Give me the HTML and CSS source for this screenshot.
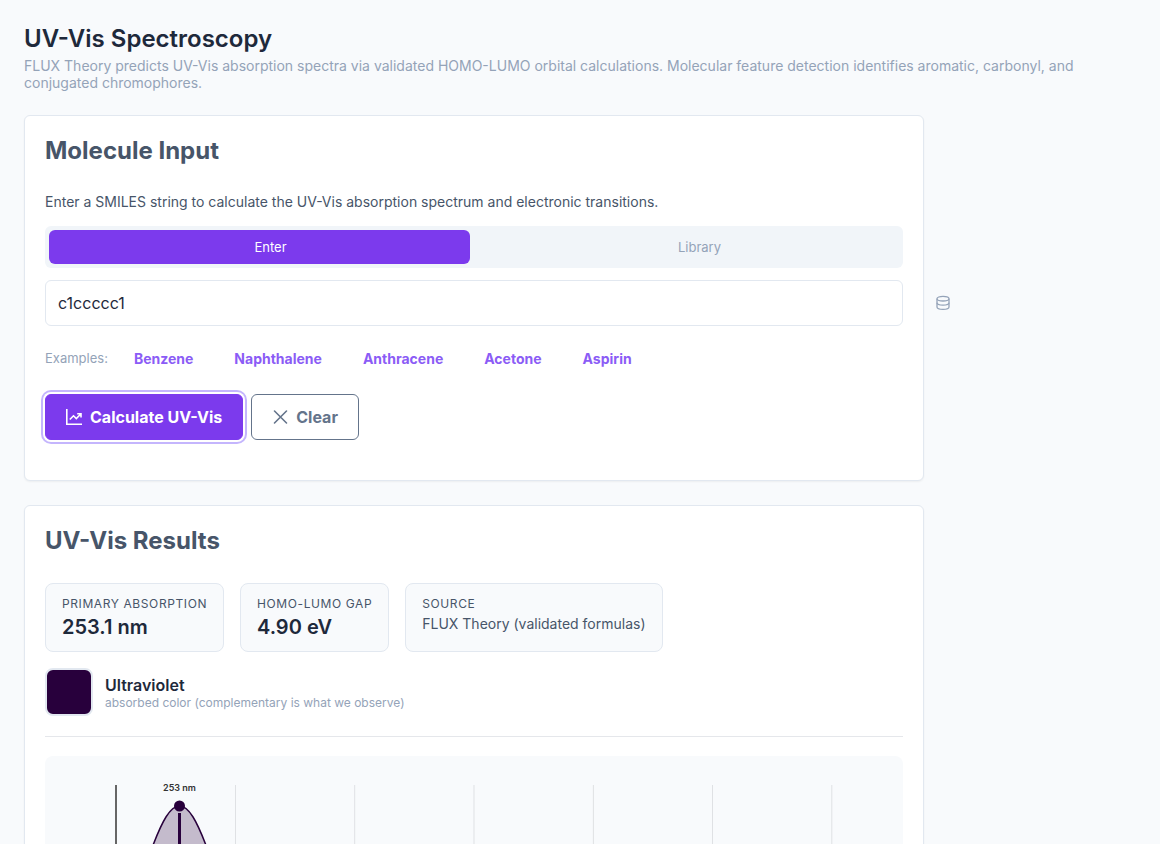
FILE: index.html
```html
<!DOCTYPE html>
<html lang="en">
<head>
  <meta charset="UTF-8">
  <meta name="viewport" content="width=device-width, initial-scale=1.0">
  <title>UV-Vis Spectroscopy</title>
  <link rel="stylesheet" href="styles.css">
</head>
<body>

<!-- Page header -->
<header class="page-header">
  <h1>UV-Vis Spectroscopy</h1>
  <p>FLUX Theory predicts UV-Vis absorption spectra via validated HOMO-LUMO orbital calculations. Molecular feature detection identifies aromatic, carbonyl, and conjugated chromophores.</p>
</header>

<main>
  <!-- Molecule input -->
  <section class="card">
    <h2>Molecule Input</h2>
    <p class="card-text">Enter a SMILES string to calculate the UV-Vis absorption spectrum and electronic transitions.</p>

    <div class="mode-toggle">
      <button type="button" class="mode active">Enter</button>
      <button type="button" class="mode">Library</button>
    </div>

    <div class="input-row">
      <input type="text" class="smiles-input" id="smiles" value="c1ccccc1" aria-label="SMILES string">
      <button type="button" class="icon-btn" aria-label="Open library">
        <svg width="16" height="16" viewBox="0 0 16 16" fill="none" stroke="currentColor" stroke-width="1.3">
          <ellipse cx="8" cy="3.7" rx="6" ry="2.3"/>
          <path d="M2 3.7v8.2c0 1.3 2.7 2.4 6 2.4s6-1.1 6-2.4V3.7"/>
          <path d="M2 7.8c0 1.3 2.7 2.4 6 2.4s6-1.1 6-2.4"/>
        </svg>
      </button>
    </div>

    <div class="examples">
      <span>Examples:</span>
      <button type="button" class="link-btn">Benzene</button>
      <button type="button" class="link-btn">Naphthalene</button>
      <button type="button" class="link-btn">Anthracene</button>
      <button type="button" class="link-btn">Acetone</button>
      <button type="button" class="link-btn">Aspirin</button>
    </div>

    <div class="actions">
      <button type="button" class="btn btn-primary">
        <svg width="16" height="16" viewBox="0 0 16 16" fill="none" stroke="currentColor" stroke-width="1.6">
          <path d="M.8 0v15.2H16"/>
          <path d="M3.8 10.500L7.500 6.800l2.800 2.800 4.200-4.400M11.200 4.800H15v3.800"/>
        </svg>
        Calculate UV-Vis
      </button>
      <button type="button" class="btn btn-outline">
        <svg width="16" height="16" viewBox="0 0 16 16" fill="none" stroke="currentColor" stroke-width="1.6" stroke-linecap="round">
          <path d="M2.500 2l12 12M14.500 2l-12 12"/>
        </svg>
        Clear
      </button>
    </div>
  </section>

  <!-- Results -->
  <section class="card">
    <h2>UV-Vis Results</h2>

    <div class="stats">
      <div class="stat">
        <div class="stat-label">Primary Absorption</div>
        <div class="stat-value">253.1 nm</div>
      </div>
      <div class="stat">
        <div class="stat-label">HOMO-LUMO Gap</div>
        <div class="stat-value">4.90 eV</div>
      </div>
      <div class="stat">
        <div class="stat-label">Source</div>
        <div class="stat-source">FLUX Theory (validated formulas)</div>
      </div>
    </div>

    <div class="color-row">
      <div class="swatch"></div>
      <div>
        <div class="color-name">Ultraviolet</div>
        <div class="color-note">absorbed color (complementary is what we observe)</div>
      </div>
    </div>

    <!-- Spectrum, 200 to 800 nm -->
    <div class="chart">
      <svg viewBox="0 0 858 320" role="img" aria-label="Absorption spectrum">
        <path class="grid" d="M190.500 29v250M309.700 29v250M429 29v250M548.400 29v250M667.500 29v250M786.800 29v250"/>
        <path class="axis" d="M71 29v250h716"/>
        <path class="peak" d="M71 211 C88 174 98 119 108.500 88 C117 66 125 50 134.500 50 C144 50 152 66 160.500 88 C174 124 188 205 206 241 C222 270 240 279 270 279 H71 Z"/>
        <path class="peak-line" d="M134.500 57v222"/>
        <circle class="peak-dot" cx="134.500" cy="50" r="5.500"/>
        <text class="peak-label" x="134.500" y="35">253 nm</text>
      </svg>
    </div>
  </section>
</main>

</body>
</html>
```

FILE: styles.css
```css
* {
  box-sizing: border-box;
}

body {
  margin: 0;
  padding: 24px;
  font-family: Inter, sans-serif;
  background: #f8fafc;
  color: #1e293b;
}

button,
input {
  font-family: inherit;
}

button {
  cursor: pointer;
}

/* Page header */
.page-header {
  margin-bottom: 24px;
}

.page-header h1 {
  margin: 0 0 4px;
  font-size: 24px;
  font-weight: 600;
  line-height: 29px;
}

.page-header p {
  margin: 0;
  font-size: 14px;
  line-height: 17px;
  color: #94a3b8;
}

/* Cards */
.card {
  max-width: 900px;
  margin-bottom: 24px;
  padding: 20px;
  background: #fff;
  border: 1px solid #e2e8f0;
  border-radius: 6px;
  box-shadow: 0 1px 2px rgba(0, 0, 0, 0.05);
}

.card h2 {
  margin: 0 0 28px;
  font-size: 24px;
  font-weight: 700;
  line-height: 29px;
  color: #475569;
}

.card-text {
  margin: 0 0 16px;
  font-size: 14px;
  line-height: 17px;
  color: #475569;
}

/* Enter / Library toggle */
.mode-toggle {
  display: grid;
  grid-template-columns: 1fr 1fr;
  gap: 8px;
  padding: 4px;
  margin-bottom: 12px;
  background: #f1f5f9;
  border-radius: 6px;
}

.mode {
  height: 34px;
  padding: 0 0 0 22px;
  border: none;
  border-radius: 6px;
  background: transparent;
  color: #94a3b8;
  font-size: 13px;
}

.mode.active {
  background: #7c3aed;
  color: #fff;
}

/* SMILES field, the library button hangs outside the card */
.input-row {
  display: flex;
  align-items: center;
  gap: 16px;
}

.smiles-input {
  flex: 0 0 100%;
  min-width: 0;
  height: 46px;
  padding: 0 12px;
  border: 1px solid #e2e8f0;
  border-radius: 6px;
  background: #fff;
  color: #1e293b;
  font-size: 16px;
}

.icon-btn {
  flex: 0 0 48px;
  height: 40px;
  padding: 0;
  border: none;
  background: transparent;
  color: #94a3b8;
}

.icon-btn svg {
  display: block;
  margin: auto;
}

/* Examples */
.examples {
  display: flex;
  flex-wrap: wrap;
  align-items: center;
  gap: 1px;
  margin: 16px 0 20px;
  font-size: 13px;
  color: #94a3b8;
}

.examples span {
  margin-right: 5px;
}

.link-btn {
  height: 32px;
  padding: 0 20px;
  border: none;
  background: transparent;
  color: #8b5cf6;
  font-size: 14px;
  font-weight: 700;
}

/* Actions */
.actions {
  display: flex;
  gap: 8px;
  margin-bottom: 20px;
}

.btn {
  display: flex;
  align-items: center;
  gap: 8px;
  height: 46px;
  padding: 0 20px;
  border: 1px solid #64748b;
  border-radius: 6px;
  font-size: 16px;
  font-weight: 700;
}

.btn-primary {
  background: #7c3aed;
  border-color: #7c3aed;
  color: #fff;
  box-shadow: 0 0 0 2px #fff, 0 0 0 4px #c4b5fd;
}

.btn-outline {
  background: #fff;
  color: #64748b;
}

/* Result stats */
.stats {
  display: flex;
  flex-wrap: wrap;
  gap: 16px;
  margin-bottom: 16px;
}

.stat {
  padding: 12px 16px;
  background: #f8fafc;
  border: 1px solid #e2e8f0;
  border-radius: 8px;
}

.stat-label {
  font-size: 12px;
  line-height: 15px;
  letter-spacing: 0.05em;
  text-transform: uppercase;
  color: #475569;
}

.stat-value {
  margin-top: 4px;
  font-size: 20px;
  font-weight: 600;
  line-height: 24px;
}

.stat-source {
  margin-top: 4px;
  font-size: 14px;
  line-height: 17px;
  color: #475569;
}

/* Absorbed colour */
.color-row {
  display: flex;
  align-items: center;
  gap: 12px;
  padding-bottom: 20px;
  margin-bottom: 19px;
  border-bottom: 1px solid #e5e7eb;
}

.swatch {
  width: 48px;
  height: 48px;
  background: #28003c;
  border: 2px solid #e2e8f0;
  border-radius: 8px;
}

.color-name {
  font-size: 16px;
  font-weight: 600;
  line-height: 20px;
}

.color-note {
  font-size: 12px;
  line-height: 15px;
  color: #94a3b8;
}

/* Spectrum chart */
.chart {
  background: #f8fafc;
  border-radius: 8px;
}

.chart svg {
  display: block;
  width: 100%;
}

.grid {
  fill: none;
  stroke: #dfe1e4;
  stroke-width: 1;
}

.axis {
  fill: none;
  stroke: #666;
  stroke-width: 2;
}

.peak {
  fill: rgba(40, 0, 60, 0.25);
  stroke: #28003c;
  stroke-width: 1.5;
}

.peak-line {
  stroke: #28003c;
  stroke-width: 3;
}

.peak-dot {
  fill: #28003c;
}

.peak-label {
  fill: #333;
  font-family: Inter, sans-serif;
  font-size: 9px;
  font-weight: 600;
  text-anchor: middle;
}
```
